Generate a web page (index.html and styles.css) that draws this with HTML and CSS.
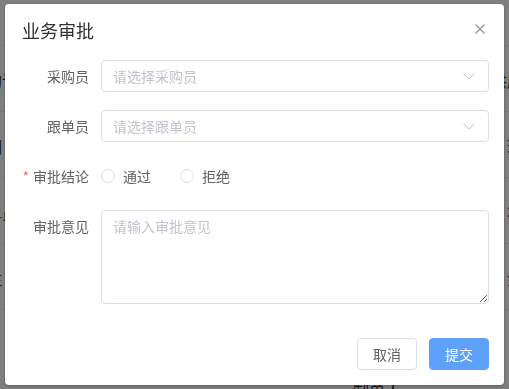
FILE: index.html
```html
<!DOCTYPE html>
<html lang="zh-CN">
  <head>
    <meta charset="UTF-8" />
    <meta name="viewport" content="width=device-width, initial-scale=1.0" />
    <title>业务审批</title>
    <link rel="stylesheet" href="styles.css">
  </head>
  <body>
    <div class="page">
      <div class="page-row"><span>采购订单</span><span>供应商</span></div>
      <div class="page-row"><span>日期</span><span>环节</span></div>
      <div class="page-row"><span>跟单员</span><span>状态</span></div>
      <div class="page-row"><span>备注</span><span>金额</span></div>
      <div class="page-row"><span>制单人</span></div>
    </div>

    <div class="overlay">
      <div class="dialog">
        <div class="dialog-header">
          <span class="dialog-title">业务审批</span>
          <button class="dialog-close" aria-label="关闭">
            <svg width="10" height="10" viewBox="0 0 10 10">
              <path d="M0.5 0.5 L9.5 9.5 M9.5 0.5 L0.5 9.5" stroke="#909399" stroke-width="1.2" fill="none" />
            </svg>
          </button>
        </div>

        <div class="dialog-body">
          <div class="form-item">
            <label class="form-label">采购员</label>
            <div class="form-content">
              <div class="select">
                <span class="placeholder">请选择采购员</span>
                <svg class="arrow" width="12" height="7" viewBox="0 0 12 7">
                  <polyline points="0.5,0.5 6,6 11.5,0.5" stroke="#c0c4cc" stroke-width="1" fill="none" />
                </svg>
              </div>
            </div>
          </div>

          <div class="form-item">
            <label class="form-label">跟单员</label>
            <div class="form-content">
              <div class="select">
                <span class="placeholder">请选择跟单员</span>
                <svg class="arrow" width="12" height="7" viewBox="0 0 12 7">
                  <polyline points="0.5,0.5 6,6 11.5,0.5" stroke="#c0c4cc" stroke-width="1" fill="none" />
                </svg>
              </div>
            </div>
          </div>

          <div class="form-item">
            <label class="form-label"><span class="required">*</span>审批结论</label>
            <div class="form-content radios">
              <label class="radio"><span class="radio-circle"></span>通过</label>
              <label class="radio"><span class="radio-circle"></span>拒绝</label>
            </div>
          </div>

          <div class="form-item">
            <label class="form-label">审批意见</label>
            <div class="form-content">
              <textarea class="textarea" placeholder="请输入审批意见"></textarea>
            </div>
          </div>
        </div>

        <div class="dialog-footer">
          <button class="btn">取消</button>
          <button class="btn btn-primary">提交</button>
        </div>
      </div>
    </div>
  </body>
</html>
```

FILE: styles.css
```css
body {
  margin: 0;
  padding: 0;
  font-family: 'Noto Sans CJK SC', 'Noto Sans', sans-serif;
  background-color: white;
  color: #606266;
}

.page {
  height: 389px;
  overflow: hidden;
  padding-top: 45px;
  box-sizing: border-box;
}

.page-row {
  display: flex;
  justify-content: space-between;
  height: 66px;
  border-top: 1px solid #ebeef5;
  font-size: 16px;
  color: #303133;
  padding: 22px 0 0;
  box-sizing: border-box;
}

.page-row span {
  margin: 0 -30px;
}

.page-row:last-child {
  justify-content: flex-end;
}

.page-row:last-child span {
  margin: 46px 108px 0 0;
}

.overlay {
  position: fixed;
  inset: 0;
  background-color: rgba(0, 0, 0, 0.5);
  display: flex;
  align-items: center;
  justify-content: center;
}

.dialog {
  position: relative;
  width: 499px;
  background-color: white;
  border-radius: 4px;
  box-shadow: 0 1px 3px rgba(0, 0, 0, 0.3);
}

.dialog-header {
  padding: 14px 16px 0 17px;
}

.dialog-title {
  font-size: 18px;
  line-height: 24px;
  color: #303133;
}

.dialog-close {
  position: absolute;
  top: 16px;
  right: 15px;
  width: 18px;
  height: 18px;
  padding: 0;
  border: none;
  background: none;
  display: flex;
  align-items: center;
  justify-content: center;
  cursor: pointer;
}

.dialog-body {
  padding: 17px 15px 0 16px;
  display: flex;
  flex-direction: column;
  gap: 18px;
}

.form-item {
  display: flex;
}

.form-label {
  width: 80px;
  flex-shrink: 0;
  padding-right: 12px;
  box-sizing: border-box;
  text-align: right;
  font-size: 14px;
  line-height: 32px;
  color: #606266;
}

.required {
  color: #f56c6c;
  margin-right: 4px;
}

.form-content {
  flex: 1;
}

.select {
  height: 32px;
  border: 1px solid #dcdfe6;
  border-radius: 4px;
  box-sizing: border-box;
  padding: 0 13px 0 11px;
  display: flex;
  align-items: center;
  justify-content: space-between;
}

.placeholder {
  font-size: 14px;
  color: #c0c4cc;
}

.radios {
  display: flex;
  align-items: center;
  height: 32px;
  gap: 29px;
}

.radio {
  display: flex;
  align-items: center;
  font-size: 14px;
  color: #606266;
}

.radio-circle {
  width: 14px;
  height: 14px;
  border: 1px solid #dcdfe6;
  border-radius: 50%;
  box-sizing: border-box;
  margin-right: 8px;
}

.textarea {
  display: block;
  width: 100%;
  height: 94px;
  box-sizing: border-box;
  border: 1px solid #dcdfe6;
  border-radius: 4px;
  padding: 5px 11px;
  font-family: 'Noto Sans CJK SC', 'Noto Sans', sans-serif;
  font-size: 14px;
  line-height: 21px;
  color: #606266;
  resize: vertical;
  outline: none;
}

.textarea::placeholder {
  color: #c0c4cc;
}

.dialog-footer {
  display: flex;
  justify-content: flex-end;
  gap: 12px;
  padding: 34px 15px 15px;
}

.btn {
  width: 60px;
  height: 32px;
  border: 1px solid #dcdfe6;
  border-radius: 4px;
  background-color: white;
  color: #606266;
  font-family: 'Noto Sans CJK SC', 'Noto Sans', sans-serif;
  font-size: 14px;
  cursor: pointer;
}

.btn-primary {
  background-color: #5ea1fa;
  border-color: #5ea1fa;
  color: white;
}
```
